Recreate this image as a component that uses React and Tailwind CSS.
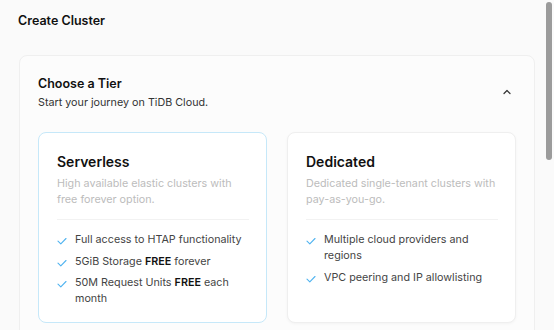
import React from 'react';

const Check = () => (
    <svg className="w-[10px] h-[10px] mt-[4px] shrink-0" viewBox="0 0 10 10" fill="none">
        <path d="M1 5.2 L3.8 7.8 L9 2.5" stroke="#4fb3f0" strokeWidth="1.1" strokeLinecap="round" strokeLinejoin="round" />
    </svg>
);

const TierCard = ({ title, desc, items, active }) => (
    <div className={`flex-1 rounded-[8px] bg-white pl-[18px] pr-[17px] pt-[19px] h-[191px] ${active ? 'border border-[#c6e8f9]' : 'border border-[#efefef] shadow-[0_1px_3px_rgba(0,0,0,0.04)]'}`}>
        <div className="text-[14px] font-semibold text-[#111] leading-[20px]">{title}</div>
        <div className="mt-[4px] text-[10.75px] leading-[16px] text-[#bcbcbc] pb-[11px] border-b border-[#f2f2f2]">{desc}</div>
        <div className="mt-[12px] flex flex-col gap-[5.5px]">
            {items.map((item, i) => (
                <div key={i} className="flex gap-[8px] text-[10.75px] leading-[16px] text-[#444]">
                    <Check />
                    <p>{item}</p>
                </div>
            ))}
        </div>
    </div>
);

export default function App() {
    return (
        <div className="w-[554px] h-[330px] overflow-hidden flex bg-[#fafafa] font-['Inter',sans-serif]">
            <div className="flex-1 pl-[18px] pr-[9px] pt-[13px]">
                {/* Title */}
                <h1 className="text-[12.5px] font-semibold text-[#111] leading-[16px]">Create Cluster</h1>

                {/* Tier panel */}
                <div className="mt-[26px] ml-[1px] rounded-[8px] border border-[#efefef] bg-[#fcfcfc] px-[18px] pt-[19px] h-[300px]">
                    <div className="flex items-start justify-between">
                        <div>
                            <div className="text-[12.5px] font-semibold text-[#111] leading-[18px]">Choose a Tier</div>
                            <div className="mt-[2px] text-[10.75px] text-[#333] leading-[16px]">Start your journey on TiDB Cloud.</div>
                        </div>
                        <svg className="w-[10px] h-[10px] mt-[12px] mr-[4px]" viewBox="0 0 10 10" fill="none">
                            <path d="M2 6.5 L5 3.5 L8 6.5" stroke="#333" strokeWidth="1.2" strokeLinecap="round" strokeLinejoin="round" />
                        </svg>
                    </div>

                    <div className="mt-[21px] flex gap-[20px]">
                        <TierCard
                            active
                            title="Serverless"
                            desc="High available elastic clusters with free forever option."
                            items={[
                                'Full access to HTAP functionality',
                                <>5GiB Storage <span className="font-semibold text-[#111]">FREE</span> forever</>,
                                <>50M Request Units <span className="font-semibold text-[#111]">FREE</span> each month</>,
                            ]}
                        />
                        <TierCard
                            title="Dedicated"
                            desc="Dedicated single-tenant clusters with pay-as-you-go."
                            items={[
                                'Multiple cloud providers and regions',
                                'VPC peering and IP allowlisting',
                            ]}
                        />
                    </div>
                </div>
            </div>

            {/* Scrollbar */}
            <div className="w-[10px] h-full flex justify-center pt-[2px]">
                <div className="w-[6px] h-[158px] rounded-full bg-[#9b9b9b]" />
            </div>
        </div>
    );
}
